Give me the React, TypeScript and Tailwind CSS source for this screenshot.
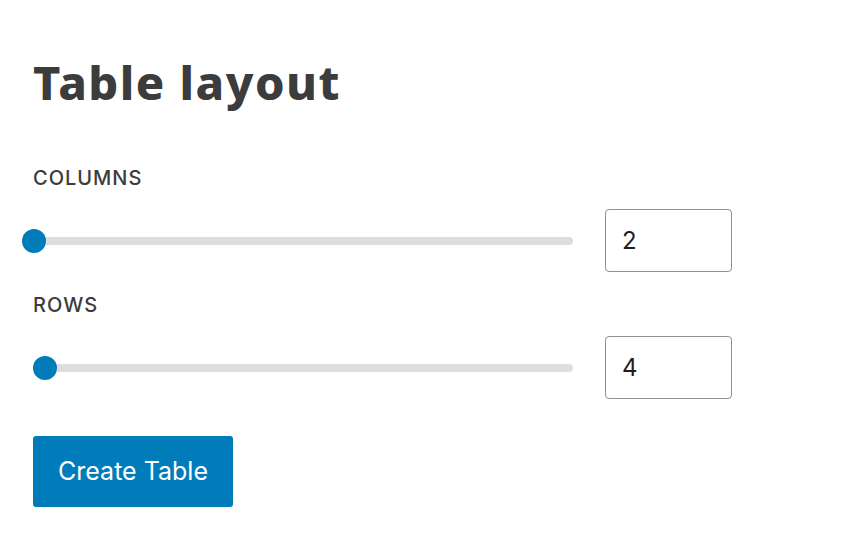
import React from "react";

type SliderRowProps = {
  label: string;
  value: number;
};

// thumb centre moves 5.5px per step, value 2 sits just past the track start
function thumbLeft(value: number) {
  return 1 + (value - 2) * 5.5 - 12;
}

function SliderRow({ label, value }: SliderRowProps) {
  return (
    <div className="flex flex-col">
      <label className="text-[20px] leading-6 font-medium tracking-[1px] text-[#3c3c3c] uppercase">
        {label}
      </label>
      <div className="mt-[19px] flex items-center h-[63px]">
        <div className="relative w-[540px] h-2 rounded-full bg-[#dddddd]">
          <div
            className="absolute top-1/2 -translate-y-1/2 w-6 h-6 rounded-full bg-[#007cba]"
            style={{ left: thumbLeft(value) }}
          />
        </div>
        <input
          type="number"
          defaultValue={value}
          className="ml-[32px] w-[127px] h-[63px] rounded border border-[#8c8f94] bg-white px-4 text-[24px] text-[#1e1e1e] focus:outline-none [appearance:textfield] [&::-webkit-inner-spin-button]:appearance-none [&::-webkit-outer-spin-button]:appearance-none"
        />
      </div>
    </div>
  );
}

export default function App() {
  return (
    <div className="w-[846px] h-[534px] bg-white pl-[33px] pt-[54px] font-['Inter',sans-serif]">
      <h1 className="font-['Noto_Sans',sans-serif] font-extrabold tracking-[1.5px] text-[47px] leading-[56px] text-[#3c3c3c]">
        Table layout
      </h1>

      <div className="mt-[56px] flex flex-col gap-[21px]">
        <SliderRow label="Columns" value={2} />
        <SliderRow label="Rows" value={4} />
      </div>

      <button
        type="button"
        className="mt-[37px] w-[200px] h-[71px] rounded-[3px] bg-[#007cba] text-white text-[25px] hover:bg-[#006ba1]"
      >
        Create Table
      </button>
    </div>
  );
}
